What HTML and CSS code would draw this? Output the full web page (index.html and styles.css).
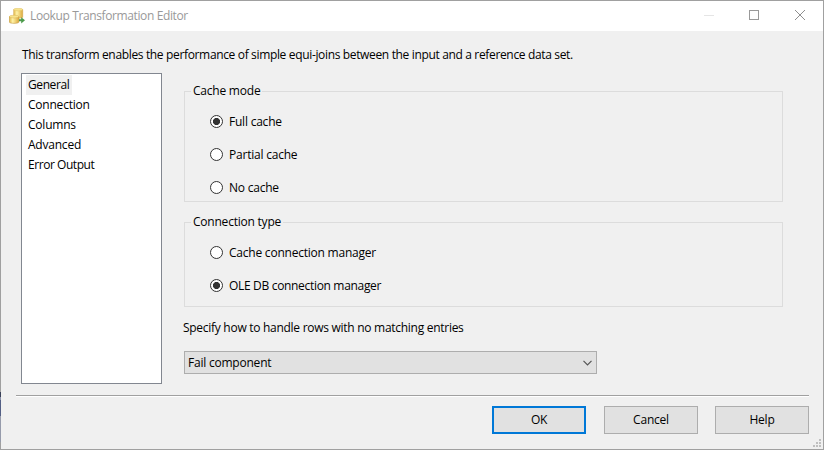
FILE: index.html
```html
<!DOCTYPE html>
<html lang="en">
<head>
<meta charset="utf-8">
<title>Lookup Transformation Editor</title>
<link rel="stylesheet" href="styles.css">
</head>
<body>
<div class="window">
  <header class="titlebar">
    <svg class="app-icon" width="16" height="16" viewBox="0 0 16 16">
      <defs><linearGradient id="gold"><stop stop-color="#e0b64a"/><stop offset=".35" stop-color="#fff3a8"/><stop offset="1" stop-color="#dba93c"/></linearGradient></defs>
      <path d="M4.6 1.6v7.6c0 1.4 9.2 1.4 9.2 0V1.6z" fill="url(#gold)" stroke="#d0a548" stroke-width=".4"/>
      <ellipse cx="9.2" cy="1.6" rx="4.6" ry="1.3" fill="#f8e48c" stroke="#d8b558" stroke-width=".4"/>
      <path d="M.3 8.6v5.5c0 1.7 9.6 1.7 9.6 0V8.6z" fill="url(#gold)" stroke="#b98c35" stroke-width=".5"/>
      <ellipse cx="5.1" cy="8.6" rx="4.8" ry="1.4" fill="#f8e48c" stroke="#d0a548" stroke-width=".4"/>
      <path d="M10 11.3h2.2V9.2L16 12.3l-3.8 3.1v-2.2H10z" fill="#4b9a4a"/>
    </svg>
    <h1 class="title">Lookup Transformation Editor</h1>
    <svg class="controls" width="102" height="11" viewBox="0 0 102 11" fill="none" shape-rendering="crispEdges">
      <path d="M0 5.5h10" stroke="#e5e5e5"/>
      <rect x="45.5" y=".5" width="9" height="9" stroke="#999"/>
      <path d="M91 0l10 10M101 0L91 10" stroke="#8f8f8f" shape-rendering="auto"/>
    </svg>
  </header>
  <p class="intro">This transform enables the performance of simple equi-joins between the input and a reference data set.</p>
  <main class="content">
    <ul class="pages">
      <li><span class="selected">General</span></li>
      <li><span>Connection</span></li>
      <li><span>Columns</span></li>
      <li><span>Advanced</span></li>
      <li><span class="tight">Error Output</span></li>
    </ul>
    <div class="settings">
      <section class="group cache">
        <h2><span>Cache mode</span></h2>
        <div class="option"><i class="radio on"></i><span>Full cache</span></div>
        <div class="option"><i class="radio"></i><span>Partial cache</span></div>
        <div class="option"><i class="radio"></i><span>No cache</span></div>
      </section>
      <section class="group connection">
        <h2><span>Connection type</span></h2>
        <div class="option"><i class="radio"></i><span>Cache connection manager</span></div>
        <div class="option"><i class="radio on"></i><span class="snug">OLE DB connection manager</span></div>
      </section>
      <p class="hint">Specify how to handle rows with no matching entries</p>
      <div class="combo"><span>Fail component</span>
        <svg width="9" height="6" viewBox="0 0 9 6"><path d="M.5.8l4 4 4-4" fill="none" stroke="#555" stroke-width="1.2"/></svg>
      </div>
    </div>
  </main>
  <footer class="actions">
    <div class="button primary">OK</div>
    <div class="button">Cancel</div>
    <div class="button help">Help</div>
  </footer>
  <svg class="grip" width="8" height="8" viewBox="0 0 8 8" fill="#bfbfbf"><path d="M6 0h2v2H6zM3 3h2v2H3zM6 3h2v2H6zM0 6h2v2H0zM3 6h2v2H3zM6 6h2v2H6z"/></svg>
</div>
</body>
</html>
```
FILE: styles.css
```css
* { box-sizing: border-box; margin: 0; padding: 0; }
body { font: 12px/20px "Open Sans", "Noto Sans", sans-serif; color: #000; letter-spacing: -0.22px; overflow: hidden; }
.window { position: relative; width: 824px; height: 450px; background: #f0f0f0; border: 1px solid #a0a0a0; display: flex; flex-direction: column; }
.titlebar { height: 30px; background: #fff; display: flex; align-items: center; padding: 0 17px 0 8px; flex: none; }
.title { font-size: 12px; font-weight: 400; color: #999; margin-left: 5px; flex: 1; letter-spacing: -0.38px; }
.controls { flex: none; margin-bottom: 1px; }
.intro { margin: 14px 0 0 21px; height: 20px; white-space: nowrap; letter-spacing: -0.345px; }
.content { display: flex; margin: 8px 0 0 20px; height: 311px; }
.pages { width: 141px; height: 311px; background: #fff; border: 1px solid #828790; list-style: none; padding: 1px 4px; flex: none; }
.pages li { height: 20px; display: flex; }
.pages span { padding: 0 2px; height: 20px; line-height: 20px; }
.pages .selected { background: #f0f0f0; letter-spacing: -0.4px; padding-right: 3px; }
.tight { letter-spacing: -0.45px; }
.snug { letter-spacing: -0.32px; }
.settings { margin-left: 21px; width: 600px; padding: 18px 0 0 1px; }
.group { width: 599px; border: 1px solid #dcdcdc; }
.group h2 { font-size: 12px; font-weight: 400; height: 20px; margin: -11px 0 4px 6px; }
.group h2 span { background: #f0f0f0; padding: 0 2px; display: inline-block; }
.option { display: flex; align-items: center; gap: 6px; height: 33px; margin-left: 25px; line-height: 21px; }
.cache { height: 111px; }
.connection { height: 85px; margin-top: 20px; }
.radio { width: 13px; height: 13px; border: 1px solid #333; border-radius: 50%; background: #fff; }
.radio.on { background: radial-gradient(circle, #333 3.2px, #fff 3.9px); }
.hint { margin: 11px 0 0 -1px; letter-spacing: -0.28px; }
.combo { width: 413px; height: 23px; margin-top: 13px; border: 1px solid #adadad; background: #e1e1e1; display: flex; align-items: center; justify-content: space-between; padding: 0 4px 0 3px; line-height: 21px; }
.actions { margin: 11px 14px 0 15px; border-top: 1px solid #a0a0a0; box-shadow: inset 0 1px #fff; padding-top: 10px; display: flex; justify-content: flex-end; }
.button { width: 94px; height: 28px; border: 1px solid #adadad; background: #e1e1e1; text-align: center; line-height: 26px; margin-left: 18px; }
.help { margin-left: 17px; }
.primary { border: 2px solid #0078d7; line-height: 24px; }
.grip { position: absolute; right: 2px; bottom: 2px; }
.window::before { content: ""; position: absolute; left: -1px; top: 391px; width: 1px; height: 50px; background: linear-gradient(#394058 5px, #8990a8 5px 8px, #535f85 8px 24px, #969bab 24px); }
```
